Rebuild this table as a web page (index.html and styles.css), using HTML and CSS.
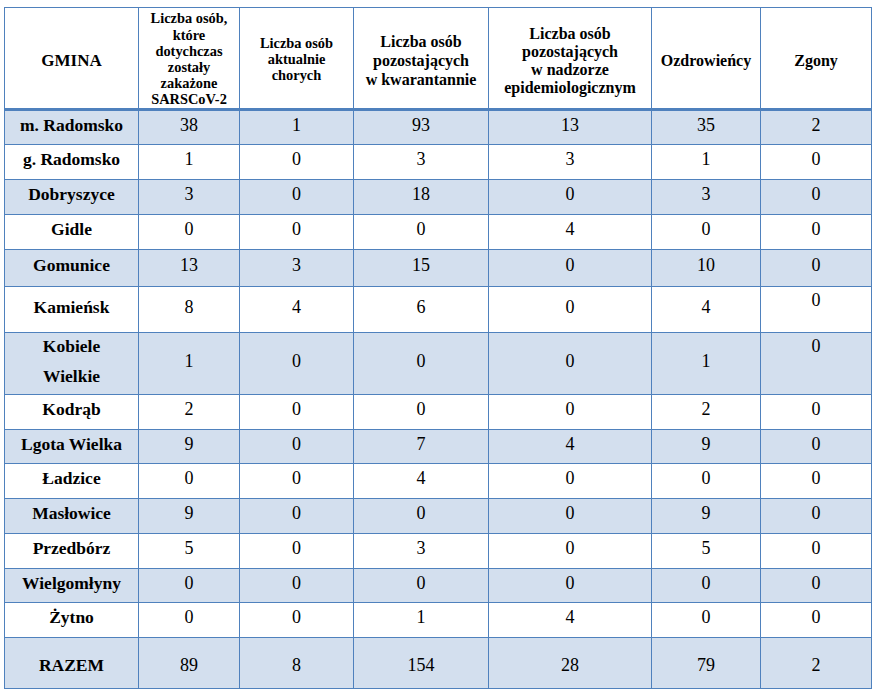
FILE: index.html
```html
<!DOCTYPE html>
<html lang="pl">
<head>
<meta charset="utf-8">
<title>Gminy</title>
<link rel="stylesheet" href="styles.css">
</head>
<body>
<div class="grid">
  <div class="row head">
    <div class="c h-gmina">GMINA</div>
    <div class="c h-sm">Liczba osób,<br>które<br>dotychczas<br>zostały<br>zakażone<br>SARSCoV-2</div>
    <div class="c h-sm">Liczba osób<br>aktualnie<br>chorych</div>
    <div class="c h-lg">Liczba osób<br>pozostających<br>w kwarantannie</div>
    <div class="c h-md">Liczba osób<br>pozostających<br>w nadzorze<br>epidemiologicznym</div>
    <div class="c h-md">Ozdrowieńcy</div>
    <div class="c h-md">Zgony</div>
  </div>
  <div class="row data band">
    <div class="c lbl">m. Radomsko</div><div class="c num">38</div><div class="c num">1</div><div class="c num">93</div><div class="c num">13</div><div class="c num">35</div><div class="c num">2</div>
  </div>
  <div class="row data">
    <div class="c lbl">g. Radomsko</div><div class="c num">1</div><div class="c num">0</div><div class="c num">3</div><div class="c num">3</div><div class="c num">1</div><div class="c num">0</div>
  </div>
  <div class="row data band">
    <div class="c lbl">Dobryszyce</div><div class="c num">3</div><div class="c num">0</div><div class="c num">18</div><div class="c num">0</div><div class="c num">3</div><div class="c num">0</div>
  </div>
  <div class="row data">
    <div class="c lbl">Gidle</div><div class="c num">0</div><div class="c num">0</div><div class="c num">0</div><div class="c num">4</div><div class="c num">0</div><div class="c num">0</div>
  </div>
  <div class="row data band">
    <div class="c lbl">Gomunice</div><div class="c num">13</div><div class="c num">3</div><div class="c num">15</div><div class="c num">0</div><div class="c num">10</div><div class="c num">0</div>
  </div>
  <div class="row data">
    <div class="c lbl">Kamieńsk</div><div class="c num">8</div><div class="c num">4</div><div class="c num">6</div><div class="c num">0</div><div class="c num">4</div><div class="c num top">0</div>
  </div>
  <div class="row data band">
    <div class="c lbl">Kobiele<br>Wielkie</div><div class="c num">1</div><div class="c num">0</div><div class="c num">0</div><div class="c num">0</div><div class="c num">1</div><div class="c num top">0</div>
  </div>
  <div class="row data">
    <div class="c lbl">Kodrąb</div><div class="c num">2</div><div class="c num">0</div><div class="c num">0</div><div class="c num">0</div><div class="c num">2</div><div class="c num">0</div>
  </div>
  <div class="row data band">
    <div class="c lbl">Lgota Wielka</div><div class="c num">9</div><div class="c num">0</div><div class="c num">7</div><div class="c num">4</div><div class="c num">9</div><div class="c num">0</div>
  </div>
  <div class="row data">
    <div class="c lbl">Ładzice</div><div class="c num">0</div><div class="c num">0</div><div class="c num">4</div><div class="c num">0</div><div class="c num">0</div><div class="c num">0</div>
  </div>
  <div class="row data band">
    <div class="c lbl">Masłowice</div><div class="c num">9</div><div class="c num">0</div><div class="c num">0</div><div class="c num">0</div><div class="c num">9</div><div class="c num">0</div>
  </div>
  <div class="row data">
    <div class="c lbl">Przedbórz</div><div class="c num">5</div><div class="c num">0</div><div class="c num">3</div><div class="c num">0</div><div class="c num">5</div><div class="c num">0</div>
  </div>
  <div class="row data band">
    <div class="c lbl">Wielgomłyny</div><div class="c num">0</div><div class="c num">0</div><div class="c num">0</div><div class="c num">0</div><div class="c num">0</div><div class="c num">0</div>
  </div>
  <div class="row data">
    <div class="c lbl">Żytno</div><div class="c num">0</div><div class="c num">0</div><div class="c num">1</div><div class="c num">4</div><div class="c num">0</div><div class="c num">0</div>
  </div>
  <div class="row total band">
    <div class="c lbl">RAZEM</div><div class="c num">89</div><div class="c num">8</div><div class="c num">154</div><div class="c num">28</div><div class="c num">79</div><div class="c num">2</div>
  </div>
</div>
</body>
</html>
```

FILE: styles.css
```css
html, body {
  margin: 0;
  padding: 0;
  background: #ffffff;
}
body {
  padding: 7px 0 0 4px;
  font-family: "Liberation Serif", "Times New Roman", serif;
  color: #000000;
}
.grid {
  display: grid;
  width: 868px;
  box-sizing: border-box;
  grid-template-columns: 133px 100px 113px 134px 162px 108px 110px;
  grid-template-rows: 102px 33px 34px 34px 34px 36px 45px 61px 34px 33px 34px 34px 34px 33px 34px 50px;
  gap: 1px;
  padding: 1px;
  background: #4f81bd;
}
.row {
  display: contents;
}
.c {
  display: flex;
  align-items: center;
  justify-content: center;
  text-align: center;
  background: #ffffff;
  overflow: hidden;
  box-sizing: border-box;
}
.band > .c {
  background: #d3dfee;
}
.head > .c {
  border-bottom: 2px solid #4f81bd;
  font-weight: bold;
  padding-top: 5px;
}
.head > .h-sm {
  padding-top: 2px;
}
.h-gmina {
  font-size: 17px;
  line-height: 20px;
}
.h-sm {
  font-size: 14.4px;
  line-height: 16.2px;
}
.h-lg {
  font-size: 16px;
  line-height: 19px;
}
.h-md {
  font-size: 16px;
  line-height: 18px;
}
.lbl {
  font-weight: bold;
  font-size: 17.5px;
  line-height: 30px;
}
.num {
  font-size: 18px;
  line-height: 20px;
}
.data > .c {
  padding-bottom: 6px;
}
.total > .c {
  padding-top: 4px;
}
.data > .num.top {
  align-items: flex-start;
  padding-top: 3px;
  padding-bottom: 0;
}
```
